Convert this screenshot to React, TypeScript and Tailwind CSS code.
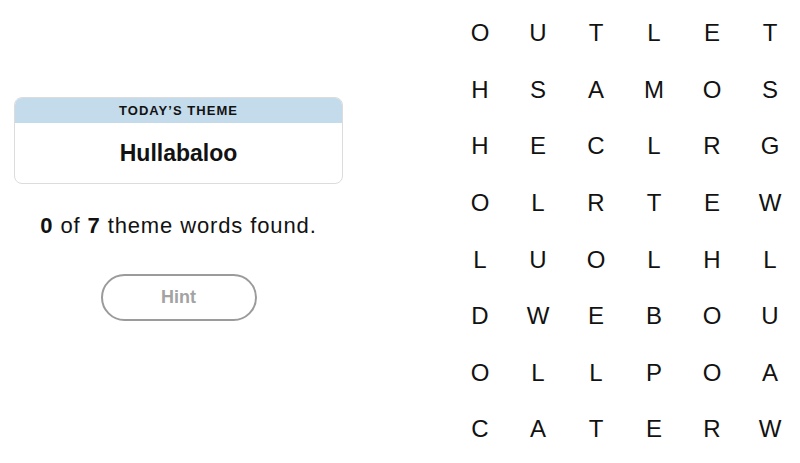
const GRID = [
  'OUTLET',
  'HSAMOS',
  'HECLRG',
  'OLRTEW',
  'LUOLHL',
  'DWEBOU',
  'OLLPOA',
  'CATERW',
];

export default function App() {
  return (
    <main className="flex h-[463px] w-[800px] bg-white text-black [font-family:'Liberation_Sans',Arial,sans-serif]">
      <section className="flex w-[357px] flex-col items-center px-[14px] pt-[97px]">
        <div className="w-full overflow-hidden rounded-[8px] border border-[#dcdcdc]">
          <div className="flex h-[25px] items-center justify-center bg-[#c4dbeb] text-[13px] font-bold tracking-[0.08em] text-[#121212]">
            TODAY’S THEME
          </div>
          <div className="flex h-[60px] items-center justify-center text-[23px] font-bold text-[#121212]">
            Hullabaloo
          </div>
        </div>
        <p className="mt-[29px] text-[22px] leading-[26px] tracking-[0.04em] text-[#121212]">
          <b>0</b> of <b>7</b> theme words found.
        </p>
        <button className="mt-[35px] h-[47px] w-[156px] rounded-full border-2 border-[#9b9b9b] text-[18px] font-bold text-[#a3a3a3]">
          Hint
        </button>
      </section>
      <section className="ml-[94px] grid grid-cols-6 content-start pt-[5px]">
        {GRID.map((row, r) =>
          row.split('').map((ch, c) => (
            <div
              key={`${r}-${c}`}
              className="flex h-[56.6px] w-[58px] items-center justify-center text-[24px] text-[#121212]"
            >
              {ch}
            </div>
          ))
        )}
      </section>
    </main>
  );
}
